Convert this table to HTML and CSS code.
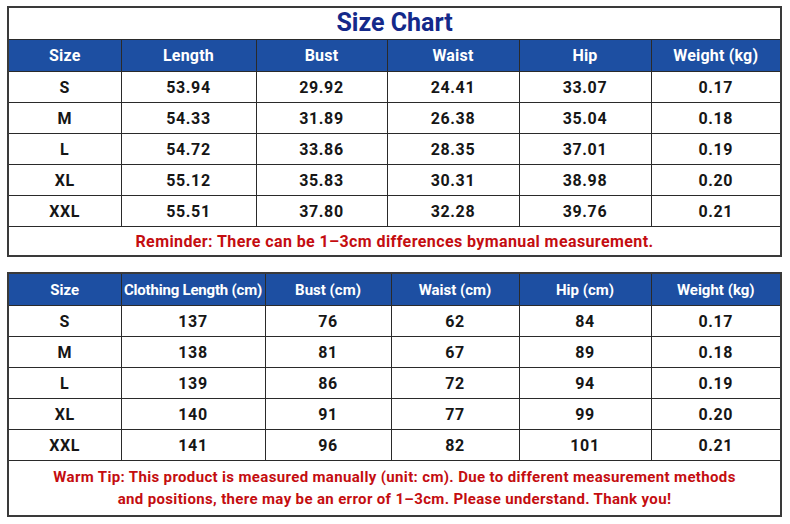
FILE: index.html
```html
<!DOCTYPE html>
<html>
<head>
<meta charset="utf-8">
<link rel="stylesheet" href="styles.css">
</head>
<body>
<div class="page">
  <table class="chart chart-a">
    <colgroup>
      <col class="c1"><col class="c2a"><col class="c3a"><col class="c4a"><col class="c5"><col class="c6">
    </colgroup>
    <tr class="title-row"><td colspan="6">Size Chart</td></tr>
    <tr class="head"><th>Size</th><th>Length</th><th>Bust</th><th>Waist</th><th>Hip</th><th>Weight (kg)</th></tr>
    <tr><td>S</td><td>53.94</td><td>29.92</td><td>24.41</td><td>33.07</td><td>0.17</td></tr>
    <tr><td>M</td><td>54.33</td><td>31.89</td><td>26.38</td><td>35.04</td><td>0.18</td></tr>
    <tr><td>L</td><td>54.72</td><td>33.86</td><td>28.35</td><td>37.01</td><td>0.19</td></tr>
    <tr><td>XL</td><td>55.12</td><td>35.83</td><td>30.31</td><td>38.98</td><td>0.20</td></tr>
    <tr><td>XXL</td><td>55.51</td><td>37.80</td><td>32.28</td><td>39.76</td><td>0.21</td></tr>
    <tr class="note-row"><td colspan="6">Reminder: There can be 1–3cm differences bymanual measurement.</td></tr>
  </table>

  <table class="chart chart-b">
    <colgroup>
      <col class="c1"><col class="c2b"><col class="c3b"><col class="c4b"><col class="c5"><col class="c6">
    </colgroup>
    <tr class="head head-b"><th>Size</th><th>Clothing Length (cm)</th><th>Bust (cm)</th><th>Waist (cm)</th><th>Hip (cm)</th><th>Weight (kg)</th></tr>
    <tr><td>S</td><td>137</td><td>76</td><td>62</td><td>84</td><td>0.17</td></tr>
    <tr><td>M</td><td>138</td><td>81</td><td>67</td><td>89</td><td>0.18</td></tr>
    <tr><td>L</td><td>139</td><td>86</td><td>72</td><td>94</td><td>0.19</td></tr>
    <tr><td>XL</td><td>140</td><td>91</td><td>77</td><td>99</td><td>0.20</td></tr>
    <tr><td>XXL</td><td>141</td><td>96</td><td>82</td><td>101</td><td>0.21</td></tr>
    <tr class="tip-row"><td colspan="6">Warm Tip: This product is measured manually (unit: cm). Due to different measurement methods<br>and positions, there may be an error of 1–3cm. Please understand. Thank you!</td></tr>
  </table>
</div>
</body>
</html>
```

FILE: styles.css
```css
html, body {
  margin: 0;
  padding: 0;
  background: #ffffff;
}

.page {
  padding: 6px 0 0 7px;
  display: flex;
  flex-direction: column;
  gap: 15px;
  font-family: Roboto, "Liberation Sans", Arial, sans-serif;
}

.chart {
  border-collapse: collapse;
  table-layout: fixed;
  width: 773px;
  border: 2px solid #3a3a3a;
  background: #ffffff;
}

.c1 { width: 113px; }
.c2a { width: 135px; }
.c3a { width: 131px; }
.c4a { width: 132px; }
.c2b { width: 144px; }
.c3b { width: 126px; }
.c4b { width: 128px; }
.c5 { width: 132px; }
.c6 { width: 130px; }

.chart td,
.chart th {
  border: 1px solid #2a2a2a;
  padding: 0;
  text-align: center;
  vertical-align: middle;
}

.chart td {
  height: 30px;
  font-size: 16px;
  font-weight: 700;
  color: #161616;
  letter-spacing: 0.6px;
}

.title-row td {
  height: 28px;
  padding-bottom: 2px;
  font-size: 25px;
  font-weight: 700;
  color: #14298a;
  letter-spacing: 0;
}

.head th {
  height: 31px;
  background: #1d4fa2;
  color: #ffffff;
  font-size: 16px;
  font-weight: 700;
  letter-spacing: 0.2px;
}

.head-b th {
  height: 31px;
  font-size: 15px;
  letter-spacing: 0;
}

.head-b th:nth-child(2) {
  letter-spacing: -0.2px;
}

.note-row td {
  height: 28px;
  color: #c40d10;
  font-size: 16px;
  letter-spacing: 0.4px;
}

.tip-row td {
  height: 54px;
  color: #c40d10;
  font-size: 15px;
  line-height: 22px;
  letter-spacing: 0.35px;
  padding-top: 0;
}
```
